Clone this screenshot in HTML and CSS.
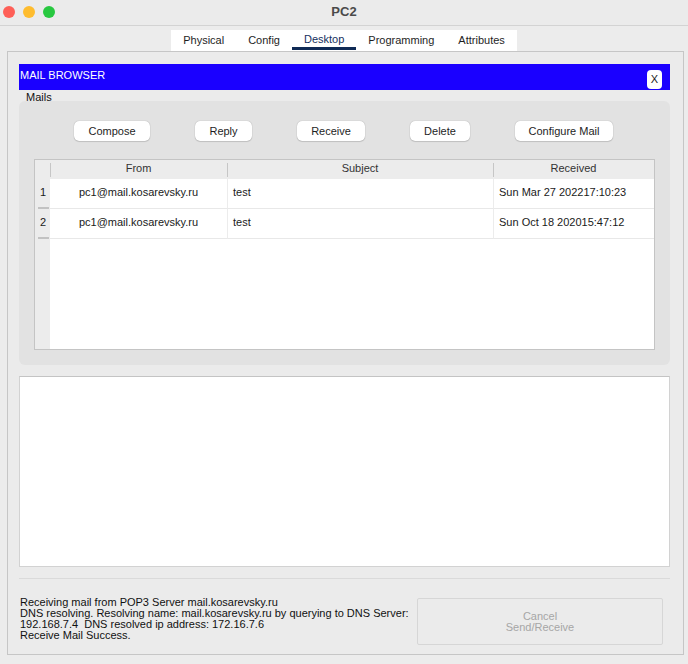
FILE: index.html
```html
<!DOCTYPE html>
<html>
<head>
<meta charset="utf-8">
<title>PC2</title>
<link rel="stylesheet" href="styles.css">
</head>
<body>
<div class="window">
  <div class="titlebar">
    <div class="lights">
      <span class="light red"></span>
      <span class="light yellow"></span>
      <span class="light green"></span>
    </div>
    <div class="title">PC2</div>
    <div></div>
  </div>

  <div class="tabs">
    <div class="tab">Physical</div>
    <div class="tab">Config</div>
    <div class="tab active">Desktop</div>
    <div class="tab">Programming</div>
    <div class="tab">Attributes</div>
  </div>

  <div class="panel">
    <div class="mailbar">
      <span class="mailbar-title">MAIL BROWSER</span>
      <span class="close-btn">X</span>
    </div>
    <div class="group-label">Mails</div>
    <div class="group">
      <div class="actions">
        <button class="btn w-compose">Compose</button>
        <button class="btn w-reply">Reply</button>
        <button class="btn w-receive">Receive</button>
        <button class="btn w-delete">Delete</button>
        <button class="btn w-config">Configure Mail</button>
      </div>
      <div class="table">
        <div class="corner"></div>
        <div class="th">From</div>
        <div class="th">Subject</div>
        <div class="th">Received</div>

        <div class="rh">1</div>
        <div class="td center">pc1@mail.kosarevsky.ru</div>
        <div class="td">test</div>
        <div class="td">Sun Mar 27 202217:10:23</div>

        <div class="rh">2</div>
        <div class="td center">pc1@mail.kosarevsky.ru</div>
        <div class="td">test</div>
        <div class="td">Sun Oct 18 202015:47:12</div>

        <div class="rh-fill"></div>
        <div class="fill"></div>
      </div>
    </div>
    <div class="preview"></div>
    <div class="separator"></div>
    <div class="bottom">
      <div class="status">Receiving mail from POP3 Server mail.kosarevsky.ru
DNS resolving. Resolving name: mail.kosarevsky.ru by querying to DNS Server:
192.168.7.4  DNS resolved ip address: 172.16.7.6
Receive Mail Success.</div>
      <button class="cancel-btn" disabled>Cancel<br>Send/Receive</button>
    </div>
  </div>
</div>
</body>
</html>
```
FILE: styles.css
```css
html, body {
  margin: 0;
  padding: 0;
}
body {
  width: 688px;
  height: 664px;
  background: #ececec;
  font-family: "Liberation Sans", Arial, sans-serif;
  color: #222;
  overflow: hidden;
}
.window {
  width: 688px;
  height: 664px;
}
.titlebar {
  height: 25px;
  border-bottom: 1px solid #d3d3d3;
  background: #ebebeb;
  display: grid;
  grid-template-columns: 1fr auto 1fr;
  align-items: center;
}
.lights {
  display: flex;
  gap: 8px;
  padding-left: 3px;
  margin-top: -2px;
}
.light {
  width: 12px;
  height: 12px;
  border-radius: 50%;
  display: block;
}
.red { background: #fe5f57; }
.yellow { background: #febc2e; }
.green { background: #28c840; }
.title {
  font-weight: bold;
  font-size: 13px;
  color: #4a4a4a;
  margin-top: -3px;
}
.tabs {
  margin: 4px auto 0;
  width: max-content;
  display: flex;
  background: #fff;
  height: 21px;
}
.tab {
  padding: 0 12px;
  font-size: 11px;
  line-height: 20px;
  color: #1e1e1e;
  box-sizing: border-box;
  height: 21px;
}
.tab.active {
  color: #15305e;
  border-bottom: 3px solid #0f2a55;
  line-height: 19px;
  height: 20px;
}
.panel {
  margin-left: 7px;
  width: 677px;
  height: 604px;
  box-sizing: border-box;
  border: 1px solid #c6c6c6;
  background: #ebebeb;
  padding: 12px 13px 9px 11px;
  display: flex;
  flex-direction: column;
}
.mailbar {
  height: 26px;
  background: #1a00ff;
  display: flex;
  justify-content: space-between;
  align-items: flex-start;
  padding-right: 8px;
  flex-shrink: 0;
}
.mailbar-title {
  color: #fff;
  font-size: 11px;
  line-height: 12px;
  padding-top: 5px;
  padding-left: 1px;
}
.close-btn {
  margin-top: 6px;
  width: 15px;
  height: 19px;
  background: #fff;
  border-radius: 4px;
  font-size: 11px;
  line-height: 19px;
  text-align: center;
  color: #222;
}
.group-label {
  height: 11px;
  font-size: 11px;
  line-height: 14px;
  padding-left: 7px;
  flex-shrink: 0;
  color: #111;
}
.group {
  height: 264px;
  box-sizing: border-box;
  background: #e2e2e2;
  border-radius: 6px;
  padding: 20px 15px 15px;
  flex-shrink: 0;
}
.actions {
  display: flex;
  gap: 45px;
  padding-left: 40px;
  height: 20px;
}
.btn {
  height: 20px;
  background: #fff;
  border: none;
  border-radius: 5px;
  box-shadow: 0 0 1px rgba(0,0,0,0.35), 0 1px 1px rgba(0,0,0,0.12);
  font-family: "Liberation Sans", Arial, sans-serif;
  font-size: 11px;
  color: #1e1e1e;
  padding: 0;
}
.w-compose { width: 76px; }
.w-reply { width: 57px; }
.w-receive { width: 68px; }
.w-delete { width: 60px; }
.w-config { width: 98px; }
.table {
  margin-top: 18px;
  height: 191px;
  box-sizing: border-box;
  border: 1px solid #c4c4c4;
  background: #fff;
  display: grid;
  grid-template-columns: 15px 177px 266px 161px;
  grid-template-rows: 19px 30px 30px 1fr;
  font-size: 11px;
  color: #1a1a1a;
}
.corner {
  background: #ececec;
}
.th {
  background: #ececec linear-gradient(#c6c6c6, #c6c6c6) no-repeat left center / 1px 14px;
  text-align: center;
  line-height: 17px;
  color: #333;
}
.rh {
  background: #ececec linear-gradient(#c2c2c2, #c2c2c2) no-repeat 3px bottom / 11px 2px;
  line-height: 27px;
  padding-left: 5px;
}
.td {
  border-bottom: 1px solid #e8e8e8;
  border-left: 1px solid #ececec;
  line-height: 27px;
  padding-left: 5px;
  white-space: nowrap;
}
.td.center {
  border-left: none;
  text-align: center;
  padding-left: 0;
}
.rh-fill {
  background: #ececec;
}
.fill {
  grid-column: 2 / 5;
  background: #fff;
}
.preview {
  margin-top: 11px;
  height: 191px;
  box-sizing: border-box;
  background: #fff;
  border: 1px solid #d2d2d2;
  border-top-color: #c4c4c4;
  flex-shrink: 0;
}
.separator {
  margin-top: 11px;
  height: 1px;
  background: #dadada;
  flex-shrink: 0;
}
.bottom {
  margin-top: 19px;
  display: flex;
  justify-content: space-between;
  align-items: flex-start;
  padding-right: 7px;
}
.status {
  margin-top: -1px;
  padding-left: 1px;
  font-size: 11px;
  line-height: 11px;
  white-space: pre;
  color: #111;
}
.cancel-btn {
  width: 246px;
  height: 47px;
  background: #ebebeb;
  border: 1px solid #d6d6d6;
  border-radius: 2px;
  font-family: "Liberation Sans", Arial, sans-serif;
  font-size: 11px;
  line-height: 11px;
  color: #a6a6a6;
  padding: 0;
}
```
